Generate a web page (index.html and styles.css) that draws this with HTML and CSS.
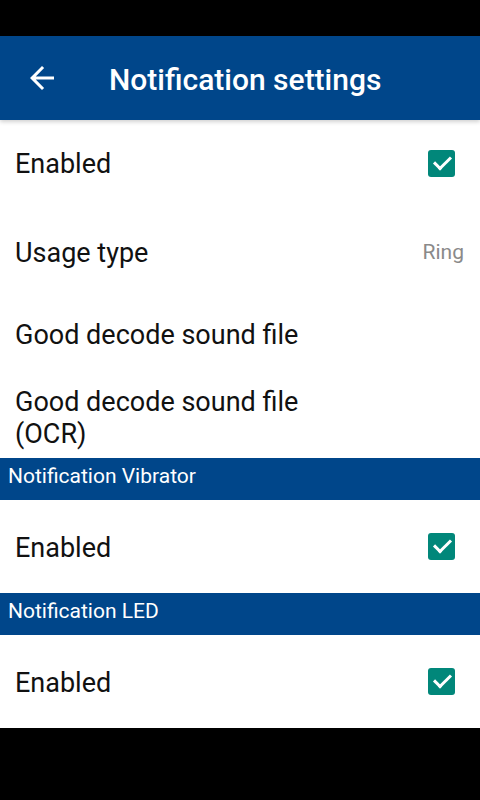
FILE: index.html
```html
<!DOCTYPE html>
<html lang="en">
<head>
  <meta charset="UTF-8" />
  <meta name="viewport" content="width=device-width, initial-scale=1.0"/>
  <title>Notification settings</title>
  <link rel="stylesheet" href="styles.css">
</head>
<body>
  <div class="status-bar"></div>

  <header class="app-bar">
    <button class="back" aria-label="Back">
      <svg viewBox="0 0 24 24" width="36" height="36">
        <path d="M20 11H7.83l5.59-5.59L12 4l-8 8 8 8 1.41-1.41L7.83 13H20v-2z" fill="#fff"/>
      </svg>
    </button>
    <h1>Notification settings</h1>
  </header>

  <main class="prefs">
    <div class="pref pref-enabled">
      <span class="pref-title">Enabled</span>
      <span class="check"></span>
    </div>
    <div class="pref pref-usage">
      <span class="pref-title">Usage type</span>
      <span class="pref-value">Ring</span>
    </div>
    <div class="pref pref-sound">
      <span class="pref-title">Good decode sound file</span>
    </div>
    <div class="pref pref-ocr">
      <span class="pref-title">Good decode sound file<br>(OCR)</span>
    </div>

    <div class="category">Notification Vibrator</div>
    <div class="pref pref-cat-item">
      <span class="pref-title">Enabled</span>
      <span class="check"></span>
    </div>

    <div class="category">Notification LED</div>
    <div class="pref pref-cat-item">
      <span class="pref-title">Enabled</span>
      <span class="check"></span>
    </div>
  </main>

  <div class="nav-bar"></div>
</body>
</html>
```

FILE: styles.css
```css
body {
  margin: 0;
  width: 480px;
  height: 800px;
  display: flex;
  flex-direction: column;
  background: #000;
  font-family: Roboto, "Noto Sans", sans-serif;
  overflow: hidden;
}

.status-bar {
  height: 36px;
  background: #000;
}

/* Toolbar */
.app-bar {
  height: 84px;
  background: #00468a;
  display: flex;
  align-items: center;
  position: relative;
  z-index: 1;
  box-shadow: 0 2px 4px rgba(0, 0, 0, 0.18);
}

.back {
  width: 36px;
  height: 36px;
  margin-left: 24px;
  padding: 0;
  border: 0;
  background: none;
  display: flex;
}

.app-bar h1 {
  margin: 2px 0 0 49px;
  color: #fff;
  font-size: 30px;
  font-weight: 500;
}

/* Preference list */
.prefs {
  background: #fff;
  display: flex;
  flex-direction: column;
}

.pref {
  display: flex;
  align-items: center;
  justify-content: space-between;
  padding: 0 25px 0 15px;
  color: #111;
}

.pref-title {
  font-size: 27px;
  line-height: 32px;
  padding-top: 2px;
}

.pref-enabled { height: 86px; }
.pref-usage { height: 92px; padding-right: 16px; }
.pref-sound { height: 72px; }
.pref-ocr {
  height: 88px;
  align-items: flex-start;
  padding-top: 14px;
  box-sizing: border-box;
}
.pref-cat-item { height: 93px; }

.pref-value {
  font-size: 21px;
  color: #8a8a8a;
}

.check {
  width: 27px;
  height: 27px;
  border-radius: 3px;
  background: #01877a;
  position: relative;
}

.check::after {
  content: "";
  position: absolute;
  left: 6px;
  top: 6px;
  width: 14px;
  height: 7px;
  border-left: 3px solid #fff;
  border-bottom: 3px solid #fff;
  transform: rotate(-45deg);
}

.category {
  height: 42px;
  background: #00468a;
  color: #fff;
  font-size: 21px;
  line-height: 36px;
  padding-left: 8px;
}

.nav-bar {
  flex: 1;
  background: #000;
}
```
